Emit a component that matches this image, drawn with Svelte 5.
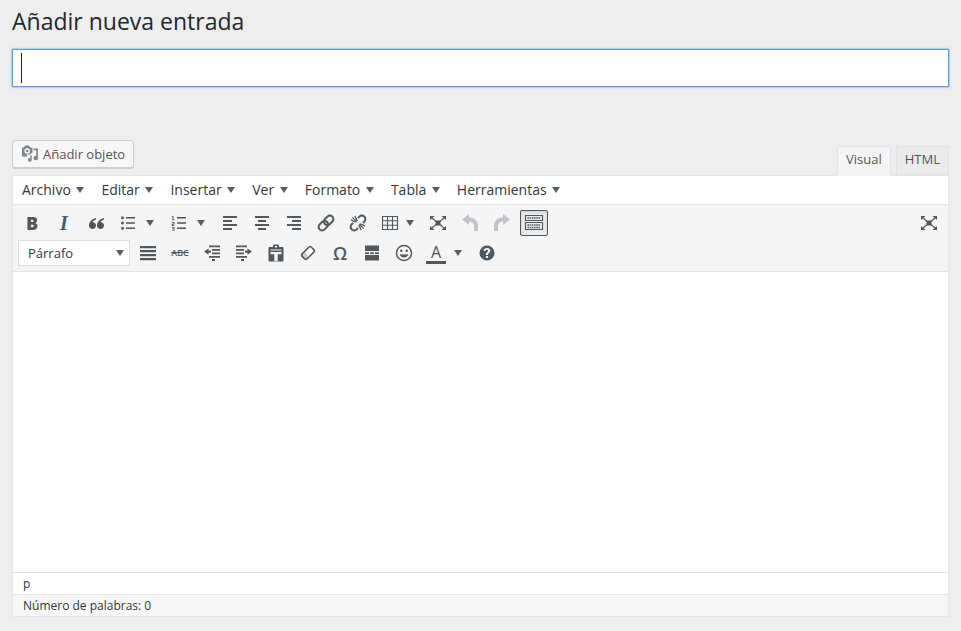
<script>
  const menus = ['Archivo', 'Editar', 'Insertar', 'Ver', 'Formato', 'Tabla', 'Herramientas'];
</script>

{#snippet caret()}
  <span class="tri"></span>
{/snippet}

{#snippet fullscreen()}
  <svg width="20" height="20" viewBox="0 0 20 20">
    <path d="M7.500 7.500l5 0 0 5-5 0z"/>
    <path d="M2 3h4.500L2 7zM18 3h-4.500L18 7zM2 17h4.500L2 13zM18 17h-4.500L18 13z"/>
    <path d="M3.500 4.500L8 8.500M16.500 4.500L12 8.500M3.500 15.500L8 11.500M16.500 15.500L12 11.500" fill="none" stroke-width="1.100"/>
  </svg>
{/snippet}

<div class="page">
  <h1>Añadir nueva entrada</h1>

  <div class="title-wrap">
    <input class="title" type="text" aria-label="Título" />
    <span class="cursor"></span>
  </div>

  <div class="editor-tools">
    <button class="media">
      <svg width="17" height="17" viewBox="0 0 17 17">
        <path d="M1 2.500h2L4 .500h4l1 2h2.500v5.300a3 3 0 0 0-2.500 1.700H6v2H2a1 1 0 0 1-1-1zM6.200 3.200a2.800 2.800 0 1 0 0 5.600a2.800 2.800 0 0 0 0-5.600z" fill="#82878c" fill-rule="evenodd"/>
        <circle cx="6.200" cy="6" r="1.300" fill="#82878c"/>
        <path d="M12.500 3.500H17v9.500a2.200 2.200 0 1 1-1.700-2.100V5.300h-2.800z" fill="#82878c"/>
        <path d="M9.300 10.500h1.400v4.300a1.900 1.900 0 1 1-1.400-1.800z" fill="#82878c"/>
      </svg>
      Añadir objeto
    </button>
    <div class="tabs">
      <span class="tab active">Visual</span>
      <span class="tab">HTML</span>
    </div>
  </div>

  <div class="editor">
    <div class="menubar">
      {#each menus as m}
        <span class="menu">{m}{@render caret()}</span>
      {/each}
    </div>

    <div class="toolbar">
      <div class="row">
        <span class="btn"><b class="glyph-b">B</b></span>
        <span class="btn"><i class="glyph-i">I</i></span>
        <span class="btn">
          <svg width="20" height="20" viewBox="0 0 20 20"><path d="M10 5C6 6 3 8.500 3 12.500c0 2 1.500 3.500 3.500 3.500S10 14.500 10 12.500s-1.500-3.200-3.300-3.200C7 7.800 8.500 7 10 6.500zM18 5c-4 1-7 3.500-7 7.500 0 2 1.500 3.500 3.500 3.500S18 14.500 18 12.500s-1.500-3.200-3.300-3.200C15 7.800 16.500 7 18 6.500z"/></svg>
        </span>
        <span class="btn split">
          <svg width="20" height="20" viewBox="0 0 20 20"><path d="M8 4h9v1.500H8zM8 9.200h9v1.500H8zM8 14.500h9V16H8z"/><circle cx="4.500" cy="4.800" r="1.500"/><circle cx="4.500" cy="10" r="1.500"/><circle cx="4.500" cy="15.200" r="1.500"/></svg>
          {@render caret()}
        </span>
        <span class="btn split">
          <svg width="20" height="20" viewBox="0 0 20 20"><path d="M8 4h9v1.500H8zM8 9.200h9v1.500H8zM8 14.500h9V16H8z"/><path d="M3 3h1.500v3.500H5.500V7.200H2.800v-.7h.8V3.900H3zM2.800 9h2.700v2.400H3.800v.8h1.700v.8H2.800v-2.300h1.700v-1H2.800zM2.800 14h2.700v3.500H2.800v-.8h1.800v-.6H3.200v-.7h1.400v-.6H2.800z"/></svg>
          {@render caret()}
        </span>
        <span class="btn">
          <svg width="20" height="20" viewBox="0 0 20 20"><path d="M3 3h14v2H3zM3 7h9v2H3zM3 11h14v2H3zM3 15h9v2H3z"/></svg>
        </span>
        <span class="btn">
          <svg width="20" height="20" viewBox="0 0 20 20"><path d="M3 3h14v2H3zM6 7h8v2H6zM3 11h14v2H3zM6 15h8v2H6z"/></svg>
        </span>
        <span class="btn">
          <svg width="20" height="20" viewBox="0 0 20 20"><path d="M3 3h14v2H3zM8 7h9v2H8zM3 11h14v2H3zM8 15h9v2H8z"/></svg>
        </span>
        <span class="btn">
          <svg width="20" height="20" viewBox="0 0 20 20"><g fill="none" stroke-width="2" transform="rotate(-45 10 10)"><rect x="1" y="6.500" width="10.500" height="7" rx="3.500"/><rect x="8.500" y="6.500" width="10.500" height="7" rx="3.500"/></g></svg>
        </span>
        <span class="btn">
          <svg width="20" height="20" viewBox="0 0 20 20"><g fill="none" stroke-width="2" transform="rotate(-45 10 10)"><path d="M6.500 6.500h-2a3.500 3.500 0 0 0 0 7h2"/><path d="M13.500 6.500h2a3.500 3.500 0 0 1 0 7h-2"/><path d="M10 2v6M10 12v6M7.300 2.800l1.700 5.200M12.700 2.800L11 8M7.300 17.200L9 12M12.700 17.200L11 12" stroke-width="1.300"/></g></svg>
        </span>
        <span class="btn table">
          <svg width="20" height="20" viewBox="0 0 20 20"><path d="M2.500 3.500h15v13h-15zM2.500 7.800h15M2.500 12.200h15M7.500 3.500v13M12.500 3.500v13" fill="none" stroke-width="1.100"/></svg>
          {@render caret()}
        </span>
        <span class="btn">{@render fullscreen()}</span>
        <span class="btn off">
          <svg width="20" height="20" viewBox="0 0 20 20"><path d="M9 1L2 6.500 9 12V8.500c3 0 5 1.500 5 4.500v5h4v-5c0-5.500-3.500-8.500-9-8.500z"/></svg>
        </span>
        <span class="btn off">
          <svg width="20" height="20" viewBox="0 0 20 20"><path d="M11 1l7 5.500L11 12V8.500c-3 0-5 1.500-5 4.500v5H2v-5c0-5.500 3.500-8.500 9-8.500z"/></svg>
        </span>
        <span class="btn on">
          <svg width="20" height="20" viewBox="0 0 20 20">
            <path d="M1.500 2.500h17v5h-17zM1.500 9.500h17v7h-17z" fill="none" stroke-width="1.200"/>
            <path d="M3.500 5h13M3.500 12h13M3.500 14.500h13" fill="none" stroke-width="1.500" stroke-dasharray="1.500 .7"/>
          </svg>
        </span>
        <span class="btn end">{@render fullscreen()}</span>
      </div>

      <div class="row">
        <span class="format">Párrafo{@render caret()}</span>
        <span class="btn">
          <svg width="20" height="20" viewBox="0 0 20 20"><path d="M2 3h16v2.200H2zM2 7h16v2.200H2zM2 11h16v2.200H2zM2 15h16v2.200H2z"/></svg>
        </span>
        <span class="btn"><span class="glyph-abc">ABC</span></span>
        <span class="btn">
          <svg width="20" height="20" viewBox="0 0 20 20"><path d="M7 2.500h11v1.700H7zM10 6h8v1.700h-8zM10 9.500h8v1.700h-8zM7 13h11v1.700H7zM10 16h3v2h-3zM2 8.500L6.500 5.500v2h2.500v2.200H6.500v2z"/></svg>
        </span>
        <span class="btn">
          <svg width="20" height="20" viewBox="0 0 20 20"><path d="M2 2.500h11v1.700H2zM2 6h8v1.700H2zM2 9.500h8v1.700H2zM2 13h11v1.700H2zM7 16h3v2H7zM18 8.500l-4.500-3v2H11v2.200h2.500v2z"/></svg>
        </span>
        <span class="btn">
          <svg width="20" height="20" viewBox="0 0 20 20"><path d="M3.500 4H7V2.500A1 1 0 0 1 8 1.500h4a1 1 0 0 1 1 1V4h3.500a1 1 0 0 1 1 1v12.500a1 1 0 0 1-1 1h-13a1 1 0 0 1-1-1V5a1 1 0 0 1 1-1zM8.800 3v1.500h2.400V3zM4.500 6.500v1h11v-1zM4.500 9v2.300h3.800V18h3.400v-6.700h3.800V9z" fill-rule="evenodd"/></svg>
        </span>
        <span class="btn">
          <svg width="20" height="20" viewBox="0 0 20 20"><g transform="rotate(-45 10 10)"><rect x="3.500" y="6.500" width="13" height="7" rx="1.800" fill="#fff" stroke-width="1.500"/><path d="M4 7h4v6H4z" opacity=".3"/></g></svg>
        </span>
        <span class="btn"><span class="glyph-omega">Ω</span></span>
        <span class="btn">
          <svg width="20" height="20" viewBox="0 0 20 20"><path d="M3 2.500h14v5.500H3zM3 9.300h4v1.600H3zM8.200 9.300h3.600v1.600H8.200zM13 9.300h4v1.600h-4zM3 12h14v5.500H3z"/></svg>
        </span>
        <span class="btn">
          <svg width="20" height="20" viewBox="0 0 20 20"><circle cx="10" cy="10" r="7.500" fill="none" stroke-width="1.400"/><circle cx="7.300" cy="7.700" r="1.200"/><circle cx="12.700" cy="7.700" r="1.200"/><path d="M5.500 11c.8 2.400 2.500 3.500 4.500 3.500s3.700-1.100 4.500-3.500c-3 .8-6 .8-9 0z"/></svg>
        </span>
        <span class="btn split">
          <span class="glyph-a">A</span>
          {@render caret()}
        </span>
        <span class="btn">
          <svg width="20" height="20" viewBox="0 0 20 20"><path d="M10 2.500a7.500 7.500 0 1 1 0 15a7.500 7.500 0 0 1 0-15zM8.900 13v2h2.200v-2zM10 5c-2 0-3.300 1-3.400 3h2.100c0-.8.500-1.300 1.200-1.300s1.200.4 1.200 1c0 1.300-2.200 1.400-2.200 3.900v.4h2.100v-.3c0-1.800 2.300-1.900 2.300-4.200C13.300 6 12 5 10 5z" fill-rule="evenodd"/></svg>
        </span>
      </div>
    </div>

    <div class="content"></div>
    <div class="path">p</div>
    <div class="count">Número de palabras: 0</div>
  </div>
</div>

<style>
  :global(body) {
    background: #eee;
    font-family: "Open Sans", sans-serif;
    color: #32373c;
  }

  .page {
    padding: 0 12px;
  }

  h1 {
    margin: 0;
    padding-top: 5px;
    height: 49px;
    box-sizing: border-box;
    font-size: 23px;
    line-height: 32px;
    font-weight: 400;
    color: #23282d;
  }

  .title-wrap {
    position: relative;
    height: 38px;
  }

  .title {
    display: block;
    width: 100%;
    height: 38px;
    box-sizing: border-box;
    margin: 0;
    background: #fff;
    border: 1px solid #5b9dd9;
    box-shadow: 0 0 2px rgba(30, 140, 190, 0.8);
    outline: none;
  }

  .cursor {
    position: absolute;
    left: 9px;
    top: 4px;
    width: 1px;
    height: 30px;
    background: #222;
  }

  .editor-tools {
    display: flex;
    justify-content: space-between;
    align-items: flex-end;
    margin-top: 53px;
  }

  .media {
    display: flex;
    align-items: center;
    gap: 5px;
    height: 28px;
    width: 122px;
    box-sizing: border-box;
    margin: 0 0 7px;
    padding: 0 0 1px 8px;
    background: #f7f7f7;
    border: 1px solid #ccc;
    border-radius: 3px;
    box-shadow: 0 1px 0 #ccc;
    font: 13px/26px "Open Sans", sans-serif;
    color: #555;
  }

  .tabs {
    display: flex;
    gap: 5px;
    margin-bottom: -1px;
    position: relative;
  }

  .tab {
    height: 29px;
    box-sizing: border-box;
    padding: 0 8px;
    border: 1px solid #e2e2e2;
    background: #ebebeb;
    font-size: 13px;
    line-height: 25px;
    color: #555;
  }

  .tab.active {
    height: 30px;
    background: #f5f5f5;
    border-bottom-color: #f5f5f5;
  }

  .editor {
    background: #fff;
    border: 1px solid #e5e5e5;
    box-shadow: 0 1px 1px rgba(0, 0, 0, 0.04);
  }

  .menubar {
    display: flex;
    height: 28px;
    padding-left: 1px;
    border-bottom: 1px solid #e5e5e5;
  }

  .menu {
    display: flex;
    align-items: center;
    padding: 0 8px 1px;
    margin-right: 1.100px;
    font-size: 14px;
    color: #32373c;
  }

  .tri {
    display: inline-block;
    width: 0;
    height: 0;
    margin-left: 5.500px;
    border-style: solid;
    border-width: 6px 4.500px 0;
    border-color: #555d66 transparent transparent;
  }

  .toolbar {
    height: 67px;
    box-sizing: border-box;
    padding: 3px 0 0 3px;
    background: #f5f5f5;
    border-bottom: 1px solid #e5e5e5;
  }

  .row {
    display: flex;
    height: 30px;
    align-items: center;
  }

  .btn {
    display: flex;
    flex: none;
    align-items: center;
    justify-content: center;
    width: 32px;
    height: 30px;
    box-sizing: border-box;
    color: #50575d;
  }

  .btn svg {
    fill: #50575d;
    stroke: #50575d;
    stroke-width: 0;
    flex: none;
  }

  .btn.split {
    justify-content: flex-start;
    width: 51px;
    padding-left: 6px;
  }

  .btn.split .tri {
    margin-left: 8px;
  }

  .btn.table {
    justify-content: flex-start;
    width: 48px;
    padding-left: 6px;
  }

  .btn.table .tri {
    margin-left: 6px;
  }

  .btn.off svg {
    fill: #c0c4c8;
    stroke: #c0c4c8;
  }

  .btn.on {
    width: 28px;
    height: 26px;
    margin: 0 2px;
    background: #ebebeb;
    border: 1px solid #555;
    border-radius: 2px;
    box-shadow: inset 0 2px 5px -3px rgba(0, 0, 0, 0.3);
  }

  .btn.end {
    margin-left: auto;
    margin-right: 3px;
  }

  .glyph-b {
    font: 800 18px/20px "Open Sans", sans-serif;
  }

  .glyph-i {
    font: italic 700 20px/20px "Liberation Serif", serif;
  }

  .glyph-abc {
    font: 600 9px/20px "Open Sans", sans-serif;
    text-decoration: line-through;
  }

  .glyph-omega {
    font: 600 18px/20px "Open Sans", sans-serif;
  }

  .glyph-a {
    width: 20px;
    text-align: center;
    border-bottom: 3px solid #50575d;
    font: 400 16px/18px "Open Sans", sans-serif;
  }

  .format {
    display: flex;
    flex: none;
    align-items: center;
    justify-content: space-between;
    width: 112px;
    height: 26px;
    box-sizing: border-box;
    margin: 0 2px;
    padding: 0 5px 0 9px;
    background: #fff;
    border: 1px solid #ddd;
    font-size: 13px;
    color: #32373c;
  }

  .content {
    height: 300px;
  }

  .path {
    height: 23px;
    box-sizing: border-box;
    padding-left: 10px;
    border-top: 1px solid #e5e5e5;
    border-bottom: 1px solid #e5e5e5;
    font-size: 12px;
    line-height: 21px;
  }

  .count {
    height: 21px;
    padding-left: 10px;
    background: #f7f7f7;
    font-size: 12px;
    line-height: 21px;
  }
</style>
